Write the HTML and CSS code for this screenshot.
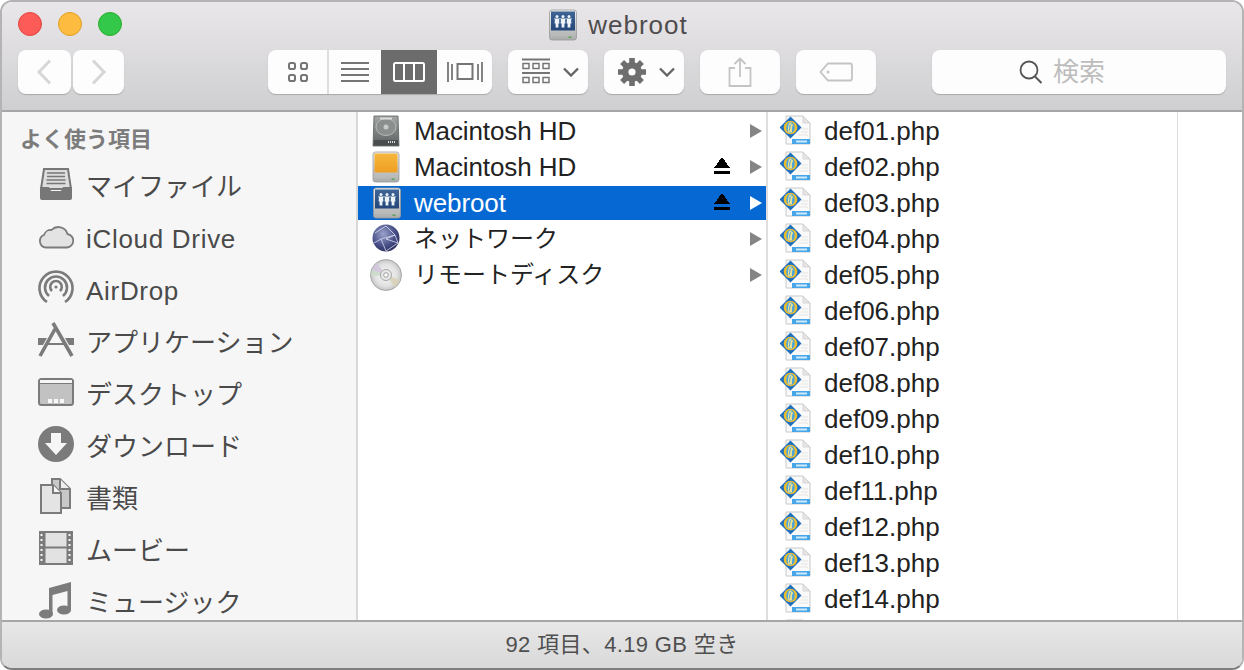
FILE: index.html
```html
<!DOCTYPE html>
<html lang="ja">
<head>
<meta charset="utf-8">
<title>webroot</title>
<link rel="stylesheet" href="styles.css">
</head>
<body>
<svg class="defs" width="0" height="0" aria-hidden="true">
  <defs>
    <linearGradient id="hd" x1="0" y1="0" x2="0" y2="1"><stop offset="0" stop-color="#a3a6a5"/><stop offset=".75" stop-color="#6d7170"/><stop offset="1" stop-color="#55585a"/></linearGradient>
    <linearGradient id="orange" x1="0" y1="0" x2="0" y2="1"><stop offset="0" stop-color="#f6b73c"/><stop offset="1" stop-color="#ee9f22"/></linearGradient>
    <linearGradient id="share" x1="0" y1="0" x2="0" y2="1"><stop offset="0" stop-color="#3f6496"/><stop offset="1" stop-color="#24467a"/></linearGradient>
    <linearGradient id="body" x1="0" y1="0" x2="0" y2="1"><stop offset="0" stop-color="#f1f1f1"/><stop offset="1" stop-color="#a9acab"/></linearGradient>
    <radialGradient id="globe" cx=".4" cy=".35" r=".75"><stop offset="0" stop-color="#9aa2cc"/><stop offset=".6" stop-color="#474e86"/><stop offset="1" stop-color="#23274f"/></radialGradient>
    <radialGradient id="cd" cx=".5" cy=".5" r=".5"><stop offset="0" stop-color="#f6f6f6"/><stop offset=".7" stop-color="#e2e2e2"/><stop offset="1" stop-color="#c4c4c4"/></radialGradient>
    <symbol id="i-share" viewBox="0 0 30 32">
      <rect x="1.500" y="1" width="27" height="30" rx="2.500" fill="url(#body)" stroke="#9a9a9a" stroke-width=".8"/>
      <rect x="3" y="2.500" width="24" height="19" fill="url(#share)"/>
      <g fill="#eef3f8">
        <circle cx="9" cy="7.500" r="1.500"/><path d="M7 10h4l.4 4.500h-1v4h-2.800v-4h-1z"/>
        <circle cx="15" cy="7.500" r="1.500"/><path d="M13 10h4l.4 4.500h-1v4h-2.800v-4h-1z"/>
        <circle cx="21" cy="7.500" r="1.500"/><path d="M19 10h4l.4 4.500h-1v4h-2.800v-4h-1z"/>
        <rect x="6" y="9.500" width="18" height=".8"/>
      </g>
      <rect x="3" y="25.500" width="24" height="1" fill="#bcbcbc"/>
      <rect x="20.500" y="27.500" width="3" height="1.500" fill="#5aa35a"/>
    </symbol>
    <symbol id="i-php" viewBox="0 0 34 34">
      <path d="M6 2h17l7 7v21H6z" fill="#fafafa" stroke="#c8c8c8"/>
      <path d="M23 2v7h7z" fill="#e6e6e6" stroke="#c8c8c8" stroke-width=".6"/>
      <path d="M21 15h7M21 18h7M19 21h9" stroke="#e4e4e4"/>
      <rect x="12" y="25" width="18" height="5" fill="#45a6ea"/>
      <rect x="16" y="26.500" width="11" height="2" fill="#cfe8fa"/>
      <path d="M10.500 2.500l11 11-11 11-11-11z" fill="#1f6fc0"/>
      <circle cx="10.500" cy="13.500" r="6.800" fill="#f0bd2a"/>
      <ellipse cx="10.500" cy="13.500" rx="4.200" ry="5.800" fill="#4aa6dc"/>
      <path d="M9 18.500c-1.300-5 .5-10 1.800-9.500s0 5-.7 9.500M11.500 18.500c-.7-3 0-7 1.300-8" fill="none" stroke="#f8e48c" stroke-width="1.200"/>
    </symbol>
  </defs>
</svg>

<div class="window">
  <header class="chrome">
    <div class="titlebar">
      <div class="lights">
        <span class="light red"></span>
        <span class="light yellow"></span>
        <span class="light green"></span>
      </div>
      <div class="title">
        <svg class="title-icon" width="30" height="32"><use href="#i-share"/></svg>
        <span class="title-text">webroot</span>
      </div>
    </div>
    <div class="toolbar">
      <div class="nav">
        <button class="btn back" aria-label="戻る"><svg width="18" height="26" viewBox="0 0 18 26"><path d="M14 1.500L3 13l11 11.500" fill="none" stroke="#d6d6d6" stroke-width="3"/></svg></button>
        <button class="btn forward" aria-label="進む"><svg width="18" height="26" viewBox="0 0 18 26"><path d="M3 1.500L14 13 3 24.500" fill="none" stroke="#d6d6d6" stroke-width="3"/></svg></button>
      </div>
      <div class="views">
        <button class="view view-icon" aria-label="アイコン"><svg width="22" height="22" viewBox="0 0 22 22" fill="none" stroke="#757575" stroke-width="2"><rect x="2" y="2" width="6" height="6" rx="1.800"/><rect x="14" y="2" width="6" height="6" rx="1.800"/><rect x="2" y="14" width="6" height="6" rx="1.800"/><rect x="14" y="14" width="6" height="6" rx="1.800"/></svg></button>
        <button class="view view-list" aria-label="リスト"><svg class="list-svg" width="28" height="22" viewBox="0 0 28 22" fill="#757575"><rect y="1" width="28" height="2"/><rect y="7" width="28" height="2"/><rect y="13" width="28" height="2"/><rect y="19" width="28" height="2"/></svg></button>
        <button class="view view-col active" aria-label="カラム"><svg width="32" height="20" viewBox="0 0 32 20" fill="none" stroke="#fff" stroke-width="2"><rect x="1" y="1" width="30" height="18" rx="1.500"/><path d="M11 1v18M21 1v18"/></svg></button>
        <button class="view view-flow" aria-label="Cover Flow"><svg width="36" height="20" viewBox="0 0 36 20" fill="none" stroke="#757575" stroke-width="1.800"><rect x="10.500" y="2" width="15" height="15" stroke-width="2"/><path d="M1 0v20M5 2v16M35 0v20M31 2v16"/></svg></button>
      </div>
      <button class="btn menu arrange" aria-label="並べ替え">
        <svg width="28" height="28" viewBox="0 0 28 28" fill="none" stroke="#757575" stroke-width="1.500"><path d="M0 1.500h28M0 15h28" stroke-width="2"/><rect x="1" y="5.500" width="6" height="5"/><rect x="11" y="5.500" width="6" height="5"/><rect x="21" y="5.500" width="6" height="5"/><rect x="1" y="19.500" width="6" height="5"/><rect x="11" y="19.500" width="6" height="5"/><rect x="21" y="19.500" width="6" height="5"/></svg>
        <svg class="caret" width="16" height="10" viewBox="0 0 16 10"><path d="M1 1.500l7 7 7-7" fill="none" stroke="#666" stroke-width="2.400"/></svg>
      </button>
      <button class="btn menu action" aria-label="アクション">
        <svg width="28" height="28" viewBox="0 0 28 28" fill="none" stroke="#6e6e6e"><circle cx="14" cy="14" r="6.800" stroke-width="6.400"/><g stroke-width="5.600"><path d="M14 0v6M14 22v6M0 14h6M22 14h6"/><path d="M4.100 4.100l4.200 4.200M19.700 19.700l4.200 4.200M23.900 4.100l-4.200 4.200M8.300 19.700l-4.200 4.200"/></g></svg>
        <svg class="caret" width="16" height="10" viewBox="0 0 16 10"><path d="M1 1.500l7 7 7-7" fill="none" stroke="#666" stroke-width="2.400"/></svg>
      </button>
      <button class="btn share" aria-label="共有"><svg width="24" height="30" viewBox="0 0 24 30" fill="none" stroke="#c4c4c4" stroke-width="1.800"><path d="M7 11H1.500v18h21V11H17M12 20V2M6.500 7L12 1.500 17.500 7"/></svg></button>
      <button class="btn tag" aria-label="タグ"><svg width="34" height="20" viewBox="0 0 34 20" fill="none" stroke="#c4c4c4" stroke-width="1.800"><path d="M9 1.500h22a2 2 0 0 1 2 2v13a2 2 0 0 1-2 2H9L1.500 10z"/><circle cx="9" cy="10" r="1.500" fill="#c4c4c4" stroke="none"/></svg></button>
      <div class="search">
        <svg width="24" height="26" viewBox="0 0 24 26" fill="none" stroke="#555" stroke-width="1.800"><circle cx="10" cy="11" r="8.500"/><path d="M16 17.500l6.500 6.500" stroke-width="2"/></svg>
        <span class="search-text">検索</span>
      </div>
    </div>
  </header>

  <main class="content">
    <nav class="sidebar">
      <div class="side-head">よく使う項目</div>
      <div class="side-row">
        <svg class="side-icon" width="36" height="36" viewBox="0 0 36 36"><path d="M6 3h24l3 20H3z" fill="#ddd" stroke="#777" stroke-width="2"/><path d="M9 7h18M9 10.500h18M8.500 14h19M8.500 17.500h19" stroke="#777" stroke-width="1.500"/><path d="M2 21h9l2 4h10l2-4h9v11a2 2 0 0 1-2 2H4a2 2 0 0 1-2-2z" fill="#777"/></svg>
        <span class="side-ja">マイファイル</span>
      </div>
      <div class="side-row">
        <svg class="side-icon" width="36" height="26" viewBox="0 0 36 26"><path d="M8 24.500A6.500 6.500 0 0 1 6 12 7 7 0 0 1 13.500 7 9.500 9.500 0 0 1 29.500 11a6.800 6.800 0 0 1-.5 13.500z" fill="#e3e3e3" stroke="#7b7b7b" stroke-width="1.800"/></svg>
        <span class="side-en">iCloud Drive</span>
      </div>
      <div class="side-row">
        <svg class="side-icon" width="36" height="36" viewBox="0 0 36 36" fill="none" stroke="#7b7b7b" stroke-width="2.600"><path d="M9 32a16.500 16.500 0 1 1 18 0"/><path d="M11 26a11 11 0 1 1 14 0"/><path d="M14 21a5.800 5.800 0 1 1 8 0"/><circle cx="18" cy="17" r="1.600" fill="#7b7b7b" stroke="none"/></svg>
        <span class="side-en">AirDrop</span>
      </div>
      <div class="side-row">
        <svg class="side-icon" width="36" height="36" viewBox="0 0 36 36"><path d="M0 16h9l-4 7H0zM36 16h-9l4 7h5zM10 21h16l1 2H9z" fill="#7b7b7b"/><path d="M2 34L17 7M15 1l19 33" fill="none" stroke="#7b7b7b" stroke-width="3.600"/></svg>
        <span class="side-ja">アプリケーション</span>
      </div>
      <div class="side-row">
        <svg class="side-icon" width="36" height="28" viewBox="0 0 36 28"><rect x="1" y="1" width="34" height="26" rx="2.500" fill="#c2c2c2" stroke="#7b7b7b" stroke-width="2"/><rect x="2" y="2" width="32" height="3" fill="#f6f6f6"/><path d="M2 5.500h32" stroke="#7b7b7b"/><rect x="10" y="21" width="4" height="4" fill="#f6f6f6"/><rect x="16" y="21" width="4" height="4" fill="#f6f6f6"/><rect x="22" y="21" width="4" height="4" fill="#f6f6f6"/></svg>
        <span class="side-ja">デスクトップ</span>
      </div>
      <div class="side-row">
        <svg class="side-icon" width="36" height="36" viewBox="0 0 36 36"><circle cx="18" cy="18" r="18" fill="#7b7b7b"/><path d="M13 7h10v10h6L18 29 7 17h6z" fill="#f6f6f6"/></svg>
        <span class="side-ja">ダウンロード</span>
      </div>
      <div class="side-row">
        <svg class="side-icon" width="36" height="36" viewBox="0 0 36 36" stroke="#7b7b7b" stroke-width="2"><path d="M14 1h8l10 10v19H14z" fill="#c8c8c8"/><path d="M22 1v10h10" fill="#eee"/><path d="M3 7h12l8 8v20H3z" fill="#e4e4e4"/><path d="M15 7v8h8" fill="#f6f6f6"/></svg>
        <span class="side-ja">書類</span>
      </div>
      <div class="side-row">
        <svg class="side-icon" width="36" height="34" viewBox="0 0 36 34"><rect x="2" y="0" width="32" height="34" fill="#e2e2e2"/><path d="M2 0h4.500v34H2zM29.500 0H34v34h-4.500zM6 1h24M6 16.500h24M6 33h24" fill="#7b7b7b" stroke="#7b7b7b" stroke-width="2"/><path d="M3.500 3v28M31.500 3v28" stroke="#f6f6f6" stroke-width="2" stroke-dasharray="2 3"/></svg>
        <span class="side-ja">ムービー</span>
      </div>
      <div class="side-row">
        <svg class="side-icon" width="36" height="38" viewBox="0 0 36 38" fill="#7b7b7b"><ellipse cx="8" cy="33" rx="7" ry="4.500"/><ellipse cx="26" cy="29" rx="7" ry="4.500"/><path d="M11 33V7L33 1v28h-3.500V10L14.500 14v19z"/></svg>
        <span class="side-ja">ミュージック</span>
      </div>
    </nav>

    <section class="column col-volumes">
      <div class="row">
        <svg class="row-icon" width="32" height="32" viewBox="0 0 32 32"><path d="M4 1h24l1 30H3z" fill="url(#hd)" stroke="#5a5d5e" stroke-width=".8"/><ellipse cx="16" cy="12" rx="10" ry="8.500" fill="#8b8f8e" stroke="#b6b8b8"/><circle cx="16" cy="12" r="2.500" fill="#c8caca"/><rect x="10" y="2.500" width="12" height="2" fill="#dcdcdc"/><path d="M4 25h24v5H4z" fill="#4a4d4e"/><path d="M18 27h8" stroke="#ddd" stroke-width="2" stroke-dasharray="1 1"/></svg>
        <span class="name">Macintosh HD</span>
        <span class="arrow"></span>
      </div>
      <div class="row">
        <svg class="row-icon" width="32" height="32" viewBox="0 0 32 32"><rect x="3" y="1" width="26" height="30" rx="2.500" fill="url(#body)" stroke="#9a9a9a" stroke-width=".8"/><rect x="4.500" y="2.500" width="23" height="19" fill="url(#orange)"/><rect x="4" y="25.500" width="24" height="1" fill="#bcbcbc"/><rect x="21.500" y="27.500" width="3" height="1.500" fill="#5aa35a"/></svg>
        <span class="name">Macintosh HD</span>
        <span class="eject"></span>
        <span class="arrow"></span>
      </div>
      <div class="row selected">
        <svg class="row-icon" width="32" height="32"><use href="#i-share" x="1"/></svg>
        <span class="name">webroot</span>
        <span class="eject"></span>
        <span class="arrow"></span>
      </div>
      <div class="row">
        <svg class="row-icon" width="32" height="32" viewBox="0 0 32 32"><circle cx="16" cy="15" r="13.500" fill="url(#globe)"/><path d="M5 10l11-7 9 9-14 4 5 12M11 16L4 20M25 12l3 8-12 8M25 12l-9 4 12 4" fill="none" stroke="#d6daf0" stroke-width="1" opacity=".8"/></svg>
        <span class="name name-ja">ネットワーク</span>
        <span class="arrow"></span>
      </div>
      <div class="row">
        <svg class="row-icon" width="32" height="32" viewBox="0 0 32 32"><circle cx="16" cy="16" r="15.500" fill="url(#cd)" stroke="#9d9d9d" stroke-width=".8"/><path d="M16 16L7 4a15 15 0 0 0-5 7z" fill="#d3c6dc" opacity=".9"/><path d="M16 16L2 11a15 15 0 0 0-1 6z" fill="#c9dcc9" opacity=".9"/><path d="M16 16l9 12a15 15 0 0 0 5-7z" fill="#d9d2b8" opacity=".9"/><circle cx="16" cy="16" r="5.500" fill="#e9e9e9" stroke="#a6a6a6"/><circle cx="16" cy="16" r="2.300" fill="#fff" stroke="#9a9a9a"/></svg>
        <span class="name name-ja">リモートディスク</span>
        <span class="arrow"></span>
      </div>
    </section>

    <section class="column col-files">
      <div class="row file"><svg class="file-icon" width="34" height="34"><use href="#i-php"/></svg><span class="name">def01.php</span></div>
      <div class="row file"><svg class="file-icon" width="34" height="34"><use href="#i-php"/></svg><span class="name">def02.php</span></div>
      <div class="row file"><svg class="file-icon" width="34" height="34"><use href="#i-php"/></svg><span class="name">def03.php</span></div>
      <div class="row file"><svg class="file-icon" width="34" height="34"><use href="#i-php"/></svg><span class="name">def04.php</span></div>
      <div class="row file"><svg class="file-icon" width="34" height="34"><use href="#i-php"/></svg><span class="name">def05.php</span></div>
      <div class="row file"><svg class="file-icon" width="34" height="34"><use href="#i-php"/></svg><span class="name">def06.php</span></div>
      <div class="row file"><svg class="file-icon" width="34" height="34"><use href="#i-php"/></svg><span class="name">def07.php</span></div>
      <div class="row file"><svg class="file-icon" width="34" height="34"><use href="#i-php"/></svg><span class="name">def08.php</span></div>
      <div class="row file"><svg class="file-icon" width="34" height="34"><use href="#i-php"/></svg><span class="name">def09.php</span></div>
      <div class="row file"><svg class="file-icon" width="34" height="34"><use href="#i-php"/></svg><span class="name">def10.php</span></div>
      <div class="row file"><svg class="file-icon" width="34" height="34"><use href="#i-php"/></svg><span class="name">def11.php</span></div>
      <div class="row file"><svg class="file-icon" width="34" height="34"><use href="#i-php"/></svg><span class="name">def12.php</span></div>
      <div class="row file"><svg class="file-icon" width="34" height="34"><use href="#i-php"/></svg><span class="name">def13.php</span></div>
      <div class="row file"><svg class="file-icon" width="34" height="34"><use href="#i-php"/></svg><span class="name">def14.php</span></div>
      <div class="row file"><svg class="file-icon" width="34" height="34"><use href="#i-php"/></svg></div>
    </section>

    <section class="column col-empty"></section>
  </main>

  <footer class="status">92 項目、4.19 GB 空き</footer>
</div>
</body>
</html>
```
FILE: styles.css
```css
* { box-sizing: border-box; }
html, body { margin: 0; height: 100%; background: #fff; overflow: hidden; }
body { font-family: "Liberation Sans", "Noto Sans CJK JP", sans-serif; }
.defs { position: absolute; }

.window {
  width: 1244px;
  height: 670px;
  display: flex;
  flex-direction: column;
  border: 2px solid #b4b4b4;
  border-bottom-color: #7e7e7e;
  border-radius: 12px;
  overflow: hidden;
  background: #fff;
}

.chrome {
  flex: none;
  box-sizing: content-box;
  height: 108px;
  background: linear-gradient(#e9e7e9, #cfced0);
  border-bottom: 2px solid #a6a6a6;
}

.titlebar { position: relative; height: 48px; display: flex; justify-content: center; }
.lights { position: absolute; left: 16px; top: 10px; display: flex; gap: 16px; }
.light { width: 24px; height: 24px; border-radius: 50%; border: 1px solid; }
.red { background: #fc5b57; border-color: #e2463f; }
.yellow { background: #fdbc40; border-color: #e1a028; }
.green { background: #34c84a; border-color: #2dac2f; }

.title { display: flex; align-items: center; gap: 10px; margin-right: 8px; height: 46px; }
.title-icon { flex: none; }
.title-text { font-size: 26px; letter-spacing: 1px; color: #4f4c4f; }

.toolbar { display: flex; align-items: flex-start; padding-left: 16px; height: 44px; }

button { font: inherit; padding: 0; margin: 0; border: 0; }
.btn, .views, .search {
  height: 44px;
  background: #fdfdfd;
  border-radius: 8px;
  box-shadow: 0 1px 1px #a9a9a9;
}
.btn { display: flex; align-items: center; justify-content: center; }
.nav { display: flex; gap: 2px; margin-right: 144px; }
.back { width: 53px; }
.forward { width: 51px; }

.views { display: flex; width: 224px; overflow: hidden; margin-right: 16px; }
.view { display: flex; align-items: center; justify-content: center; background: transparent; height: 44px; }
.view-icon { width: 61px; border-right: 2px solid #dedede; }
.view-list { width: 52px; }
.list-svg { margin-right: 1px; }
.view-col { width: 56px; }
.view-flow { width: 55px; }
.view.active { background: #6c6c6c; }

.menu { width: 80px; margin-right: 16px; gap: 13px; padding-left: 4px; }
.share { width: 80px; margin-right: 16px; }
.tag { width: 80px; margin-right: 56px; }
.search { width: 294px; display: flex; align-items: center; justify-content: center; gap: 10px; padding-right: 34px; }
.search-text { font-size: 26px; line-height: 30px; color: #bdbdbd; }

.content { flex: 1; min-height: 0; display: flex; overflow: hidden; background: #fff; }

.sidebar {
  flex: none;
  width: 356px;
  background: #f6f6f6;
  border-right: 2px solid #d8d8d8;
  overflow: hidden;
  padding-top: 12px;
}
.side-head { font-size: 22px; font-weight: bold; color: #7c7c7c; padding-left: 18px; height: 32px; line-height: 32px; margin-bottom: 2px; }
.side-row { height: 52px; display: flex; align-items: center; padding-left: 36px; color: #4a4a4a; flex: none; }
.side-icon { flex: none; margin-right: 12px; }
.side-ja { font-size: 26px; white-space: nowrap; }
.side-en { font-size: 26px; letter-spacing: .7px; white-space: nowrap; padding-top: 6px; }

.column { flex: none; padding-top: 2px; overflow: hidden; border-right: 2px solid #dedede; }
.col-volumes { width: 410px; }
.col-files { width: 410px; border-right-width: 1px; }
.col-empty { flex: 1; border-right: 0; }

.row { height: 34px; margin-bottom: 2px; display: flex; align-items: center; padding-left: 12px; color: #222; white-space: nowrap; }
.row-icon { flex: none; margin-right: 12px; }
.file-icon { flex: none; margin-right: 10px; }
.name { font-size: 26px; letter-spacing: -.1px; flex: 1; }
.file .name { letter-spacing: 0; }
.name-ja { font-size: 24px; letter-spacing: 0; padding-bottom: 5px; }

.selected { background: #0669d3; color: #fff; }
.eject {
  flex: none;
  width: 16px;
  height: 17px;
  margin-right: 20px;
  margin-bottom: 3px;
  background: linear-gradient(#000, #000) bottom / 16px 3px no-repeat,
              linear-gradient(to bottom right, transparent 50%, #000 50%) left top / 8px 11px no-repeat,
              linear-gradient(to bottom left, transparent 50%, #000 50%) right top / 8px 11px no-repeat;
}
.arrow {
  flex: none;
  width: 0;
  height: 0;
  margin-right: 4px;
  margin-bottom: 1px;
  border-left: 12px solid #858585;
  border-top: 7px solid transparent;
  border-bottom: 7px solid transparent;
}
.selected .arrow { border-left-color: #fff; }

.status {
  flex: none;
  height: 48px;
  border-top: 2px solid #a6a6a6;
  background: linear-gradient(#e7e7e7, #d9d9d9);
  color: #4f4f4f;
  font-size: 22px;
  letter-spacing: .35px;
  padding-bottom: 7px;
  display: flex;
  align-items: center;
  justify-content: center;
}
```
